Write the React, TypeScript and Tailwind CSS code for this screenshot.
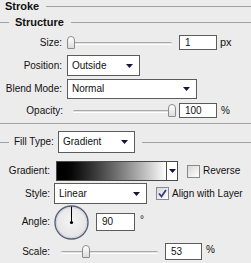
import React from 'react';

function Line({ className = '' }: { className?: string }) {
  return <div className={`h-px bg-[#a2a2a2] ${className}`} />;
}

function Arrow() {
  return (
    <svg width="7" height="4" viewBox="0 0 7 4" className="shrink-0">
      <path d="M0 0H7L3.5 4Z" fill="#14143c" />
    </svg>
  );
}

function Dropdown({ value, width, height = 'h-[21px]' }: { value: string; width: string; height?: string }) {
  return (
    <div className={`${width} ${height} flex items-center justify-between border border-[#5c5c5c] bg-white pl-[4px] pr-[6px]`}>
      <span>{value}</span>
      <Arrow />
    </div>
  );
}

function Slider({ width, thumbLeft, ml }: { width: string; thumbLeft: string; ml: string }) {
  return (
    <div className={`relative h-full ${width} ${ml}`}>
      <div className="absolute left-[3px] right-0 top-1/2 mt-[-1px] h-[3px] rounded-full border-t border-[#a8a8a8] bg-[#e2e2e2] border-b border-b-white" />
      <div
        className={`absolute top-1/2 mt-[-7px] h-[13px] w-[8px] rounded-t-[4px] rounded-b-[1px] border border-[#8c8c8c] bg-gradient-to-b from-white to-[#dcdcdc] ${thumbLeft}`}
      />
    </div>
  );
}

function Field({ value, width, height = 'h-[15px]', ml }: { value: string; width: string; height?: string; ml: string }) {
  return (
    <div className={`${width} ${height} ${ml} flex items-center border border-[#5c5c5c] bg-white pl-[5px]`}>
      {value}
    </div>
  );
}

function Checkbox({ checked }: { checked?: boolean }) {
  return (
    <div className="flex h-[13px] w-[13px] items-center justify-center border border-[#8a8a8a] bg-gradient-to-br from-[#d8d8d8] to-white">
      {checked && (
        <svg width="9" height="9" viewBox="0 0 9 9">
          <path d="M1 4.5L3.5 7.5L8 1" fill="none" stroke="#3a3a86" strokeWidth="1.8" />
        </svg>
      )}
    </div>
  );
}

export default function App() {
  return (
    <div className="h-[263px] w-[251px] overflow-hidden bg-[#ececec] font-['Liberation_Sans',Arial,sans-serif] text-[10px] leading-none text-[#111]">
      {/* Stroke header */}
      <div className="flex h-[13px] items-center pl-[5px]">
        <span className="text-[11px] font-bold">Stroke</span>
        <Line className="ml-[7px] flex-1" />
      </div>

      {/* Structure group */}
      <div className="border-b border-[#a2a2a2] pb-[2px]">
        <div className="mt-[4px] flex h-[10px] items-center">
          <Line className="w-[9px]" />
          <span className="ml-[6px] text-[11px] font-bold">Structure</span>
          <Line className="ml-[7px] flex-1" />
        </div>

        <div className="mt-[4px] flex h-[23px] items-center">
          <span className="w-[62px] text-right">Size:</span>
          <Slider width="w-[106px]" ml="ml-[4px]" thumbLeft="left-[1px]" />
          <Field value="1" width="w-[38px]" ml="ml-[7px]" />
          <span className="ml-[3px] text-[11px]">px</span>
        </div>

        <div className="flex h-[23px] items-center">
          <span className="w-[62px] text-right">Position:</span>
          <div className="ml-[5px]">
            <Dropdown value="Outside" width="w-[73px]" />
          </div>
        </div>

        <div className="flex h-[23px] items-center">
          <span className="w-[62px] text-right">Blend Mode:</span>
          <div className="ml-[5px]">
            <Dropdown value="Normal" width="w-[130px]" height="h-[20px]" />
          </div>
        </div>

        <div className="flex h-[21px] items-center">
          <span className="w-[63px] text-right">Opacity:</span>
          <Slider width="w-[102px]" ml="ml-[7px]" thumbLeft="left-[98px]" />
          <Field value="100" width="w-[38px]" ml="ml-[7px]" />
          <span className="ml-[4px]">%</span>
        </div>
      </div>

      {/* Fill type */}
      <div className="mt-[7px] flex h-[22px] items-center">
        <Line className="w-[9px]" />
        <span className="ml-[5px] w-[40px] whitespace-nowrap">Fill Type:</span>
        <div className="ml-[4px]">
          <Dropdown value="Gradient" width="w-[77px]" height="h-[22px]" />
        </div>
        <Line className="ml-[7px] flex-1" />
      </div>

      <div className="mt-[8px] flex h-[20px] items-center">
        <span className="w-[50px] text-right">Gradient:</span>
        <div className="ml-[6px] flex h-[20px] border border-[#4a4a4a]">
          <div className="h-full w-[109px] bg-gradient-to-r from-black to-white" />
          <div className="flex h-full w-[11px] items-center justify-center border-l border-[#4a4a4a] bg-white">
            <Arrow />
          </div>
        </div>
        <div className="ml-[9px]">
          <Checkbox />
        </div>
        <span className="ml-[3px]">Reverse</span>
      </div>

      <div className="mt-[2px] flex h-[21px] items-center">
        <span className="w-[50px] text-right">Style:</span>
        <div className="ml-[4px]">
          <Dropdown value="Linear" width="w-[93px]" />
        </div>
        <div className="ml-[9px]">
          <Checkbox checked />
        </div>
        <span className="ml-[3px]">Align with Layer</span>
      </div>

      <div className="flex h-[36px] items-center">
        <span className="w-[50px] text-right">Angle:</span>
        <svg width="35" height="35" viewBox="0 0 35 35" className="ml-[4px]">
          <defs>
            <radialGradient id="dial" cx="50%" cy="45%" r="60%">
              <stop offset="0%" stopColor="#f4f4f4" />
              <stop offset="100%" stopColor="#e2e2e2" />
            </radialGradient>
          </defs>
          <circle cx="17.5" cy="17.5" r="16.5" fill="url(#dial)" stroke="#56627a" strokeWidth="1.4" />
          <circle cx="17.5" cy="17.5" r="15.2" fill="none" stroke="#c8ccd4" strokeWidth="0.8" />
          <line x1="17.5" y1="17.5" x2="17.5" y2="1.5" stroke="#000" strokeWidth="1" />
          <circle cx="17.5" cy="17.5" r="1.6" fill="#000" />
        </svg>
        <Field value="90" width="w-[39px]" height="h-[18px]" ml="ml-[7px]" />
        <span className="ml-[5px] mb-[4px]">°</span>
      </div>

      <div className="mt-[3px] flex h-[17px] items-center">
        <span className="w-[50px] text-right">Scale:</span>
        <Slider width="w-[100px]" ml="ml-[8px]" thumbLeft="left-[24px]" />
        <Field value="53" width="w-[37px]" height="h-[17px]" ml="ml-[7px]" />
        <span className="ml-[4px] mb-[3px]">%</span>
      </div>
    </div>
  );
}
